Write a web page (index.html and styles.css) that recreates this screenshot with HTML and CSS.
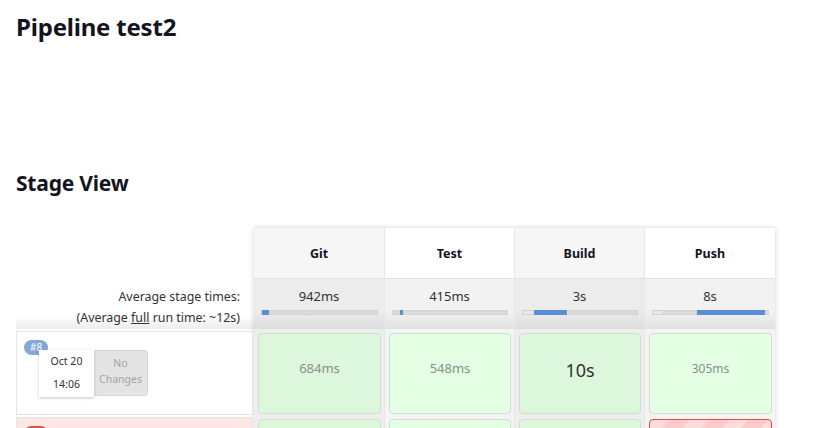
FILE: index.html
```html
<!DOCTYPE html>
<html>
<head>
<meta charset="utf-8">
<link rel="stylesheet" href="styles.css">
</head>
<body>
<h1 class="title">Pipeline test2</h1>
<h2 class="section">Stage View</h2>
<div class="stage-view">
  <div class="row-heads">
    <div class="rh-top"></div>
    <div class="rh-avg">
      <div>Average stage times:</div>
      <div>(Average <u>full</u> run time: ~12s)</div>
    </div>
    <div class="rh-build ok">
      <span class="badge blue">#8</span>
      <div class="build-info">
        <div class="date"><div>Oct 20</div><div>14:06</div></div>
        <div class="changes"><div>No</div><div>Changes</div></div>
      </div>
    </div>
    <div class="rh-build failed">
      <span class="badge red">#7</span>
    </div>
  </div>
  <div class="stages">
    <div class="col odd first">
      <div class="head">Git</div>
      <div class="avg">942ms<div class="track"><span class="light" style="width:0px"></span><span class="div" style="left:44px"></span><span class="fill" style="left:0px;width:7px"></span></div></div>
      <div class="slot"><div class="cell g1">684ms</div></div>
      <div class="slot"><div class="cell g1"></div></div>
    </div>
    <div class="col even">
      <div class="head">Test</div>
      <div class="avg">415ms<div class="track"><span class="light" style="width:0px"></span><span class="div" style="left:44px"></span><span class="fill" style="left:7px;width:3px"></span></div></div>
      <div class="slot"><div class="cell g2">548ms</div></div>
      <div class="slot"><div class="cell g2"></div></div>
    </div>
    <div class="col odd">
      <div class="head">Build</div>
      <div class="avg">3s<div class="track"><span class="light" style="width:11px"></span><span class="div" style="left:44px"></span><span class="fill" style="left:11px;width:33px"></span></div></div>
      <div class="slot"><div class="cell g1 big">10s</div></div>
      <div class="slot"><div class="cell g1"></div></div>
    </div>
    <div class="col even">
      <div class="head">Push</div>
      <div class="avg">8s<div class="track"><span class="light" style="width:9px"></span><span class="div" style="left:44px"></span><span class="fill" style="left:44px;width:68px"></span></div></div>
      <div class="slot"><div class="cell g2 small">305ms</div></div>
      <div class="slot"><div class="cell fail"></div></div>
    </div>
  </div>
</div>
</body>
</html>
```
FILE: styles.css
```css
html, body {
  margin: 0;
  background: #fff;
}
body {
  padding: 0 16px;
  font-family: "Noto Sans", "Open Sans", sans-serif;
  color: #333;
}
.title {
  margin: 10px 0 0;
  font-size: 24px;
  line-height: 34px;
  font-weight: 700;
  color: #14141f;
  letter-spacing: -0.2px;
}
.section {
  margin: 125px 0 0;
  font-size: 21px;
  line-height: 29px;
  font-weight: 700;
  color: #14141f;
  letter-spacing: -0.2px;
}
.stage-view {
  display: flex;
  margin-top: 30px;
}
.row-heads {
  width: 238px;
  display: flex;
  flex-direction: column;
}
.row-heads > * { flex-shrink: 0; }
.rh-top {
  height: 51px;
}
.rh-avg {
  height: 50px;
  box-sizing: border-box;
  padding: 7px 14px 0 0;
  text-align: right;
  font-size: 12.4px;
  line-height: 21px;
  color: #333;
  background: linear-gradient(to bottom, #fff 0, #fff 72%, #ececec 100%);
}
.rh-avg u { text-decoration: underline; }
.rh-build {
  position: relative;
  height: 84px;
  box-sizing: border-box;
  border: 1px solid #e6e6e6;
  margin-right: 1px;
}
.rh-build.ok { background: #fff; margin-top: 2px; }
.rh-build.failed { background: #fde7e4; margin-top: 2px; }
.badge {
  position: absolute;
  left: 7px;
  top: 8px;
  height: 15px;
  padding: 0 6px;
  border-radius: 8px;
  font-size: 10px;
  line-height: 15px;
  color: #fff;
}
.badge.blue { background: #84a8d4; }
.badge.red { background: #d9534f; }
.build-info {
  display: flex;
  margin: 18px 0 0 22px;
}
.date {
  width: 55px;
  height: 47px;
  box-sizing: border-box;
  background: #fff;
  box-shadow: 0 1px 3px rgba(0,0,0,0.22);
  text-align: center;
  font-size: 10.5px;
  line-height: 23px;
  color: #333;
  position: relative;
  z-index: 1;
}
.changes {
  width: 54px;
  height: 46px;
  box-sizing: border-box;
  background: #e4e4e4;
  border: 1px solid #d6d6d6;
  border-left: 0;
  border-radius: 0 4px 4px 0;
  text-align: center;
  font-size: 10.5px;
  line-height: 16px;
  padding-top: 4px;
  color: #a3a3a3;
}
.stages {
  display: flex;
  box-shadow: 0 0 5px rgba(0,0,0,0.18);
  align-self: flex-start;
}
.col {
  width: 130px;
  box-sizing: border-box;
  border-right: 1px solid #e8e8e8;
}
.col.first { width: 131px; }
.col:last-child { border-right: 0; }
.head {
  height: 50px;
  border-bottom: 1px solid #e2e2e2;
  text-align: center;
  font-size: 12.5px;
  font-weight: 700;
  line-height: 52px;
  color: #14141f;
}
.odd .head { background: #f6f6f6; }
.even .head { background: #fff; }
.avg {
  height: 50px;
  box-sizing: border-box;
  padding-top: 7px;
  text-align: center;
  font-size: 13px;
  line-height: 20px;
  color: #333;
}
.odd .avg { background: linear-gradient(to bottom, #ececec 0, #ececec 65%, #dcdcdc 100%); }
.even .avg { background: linear-gradient(to bottom, #f2f2f2 0, #f2f2f2 65%, #e0e0e0 100%); }
.track {
  position: relative;
  margin: 4px 6px 0 7px;
  height: 3px;
  border: 1px solid #d2d2d2;
  background: #dadada;
}
.track .light {
  position: absolute;
  left: 0;
  top: 0;
  height: 3px;
  background: #e8e8e8;
}
.track .div {
  position: absolute;
  top: 0;
  width: 1px;
  height: 3px;
  background: #e6e6e6;
}
.track .fill {
  position: absolute;
  top: -1px;
  height: 5px;
  background: #5a8fd6;
}
.slot {
  padding: 4px 3px 0 4px;
  height: 86px;
  box-sizing: border-box;
}
.odd .slot { background: #eeeeee; }
.even .slot { background: #f4f4f4; }
.cell {
  height: 81px;
  box-sizing: border-box;
  border: 1px solid #d2dcd2;
  border-radius: 4px;
  display: flex;
  align-items: center;
  justify-content: center;
  padding-bottom: 11px;
  font-size: 13px;
  color: #8a8f8a;
}
.g1 { background: #ddf7dd; }
.g2 { background: #e4ffe4; }
.cell.big { font-size: 18px; color: #333; padding-bottom: 8px; }
.cell.small { font-size: 12px; }
.cell.fail {
  border: 1px solid #e04848;
  background: repeating-linear-gradient(135deg, #ffdcdc 0, #ffdcdc 14px, #ffcaca 14px, #ffcaca 28px);
}
```
